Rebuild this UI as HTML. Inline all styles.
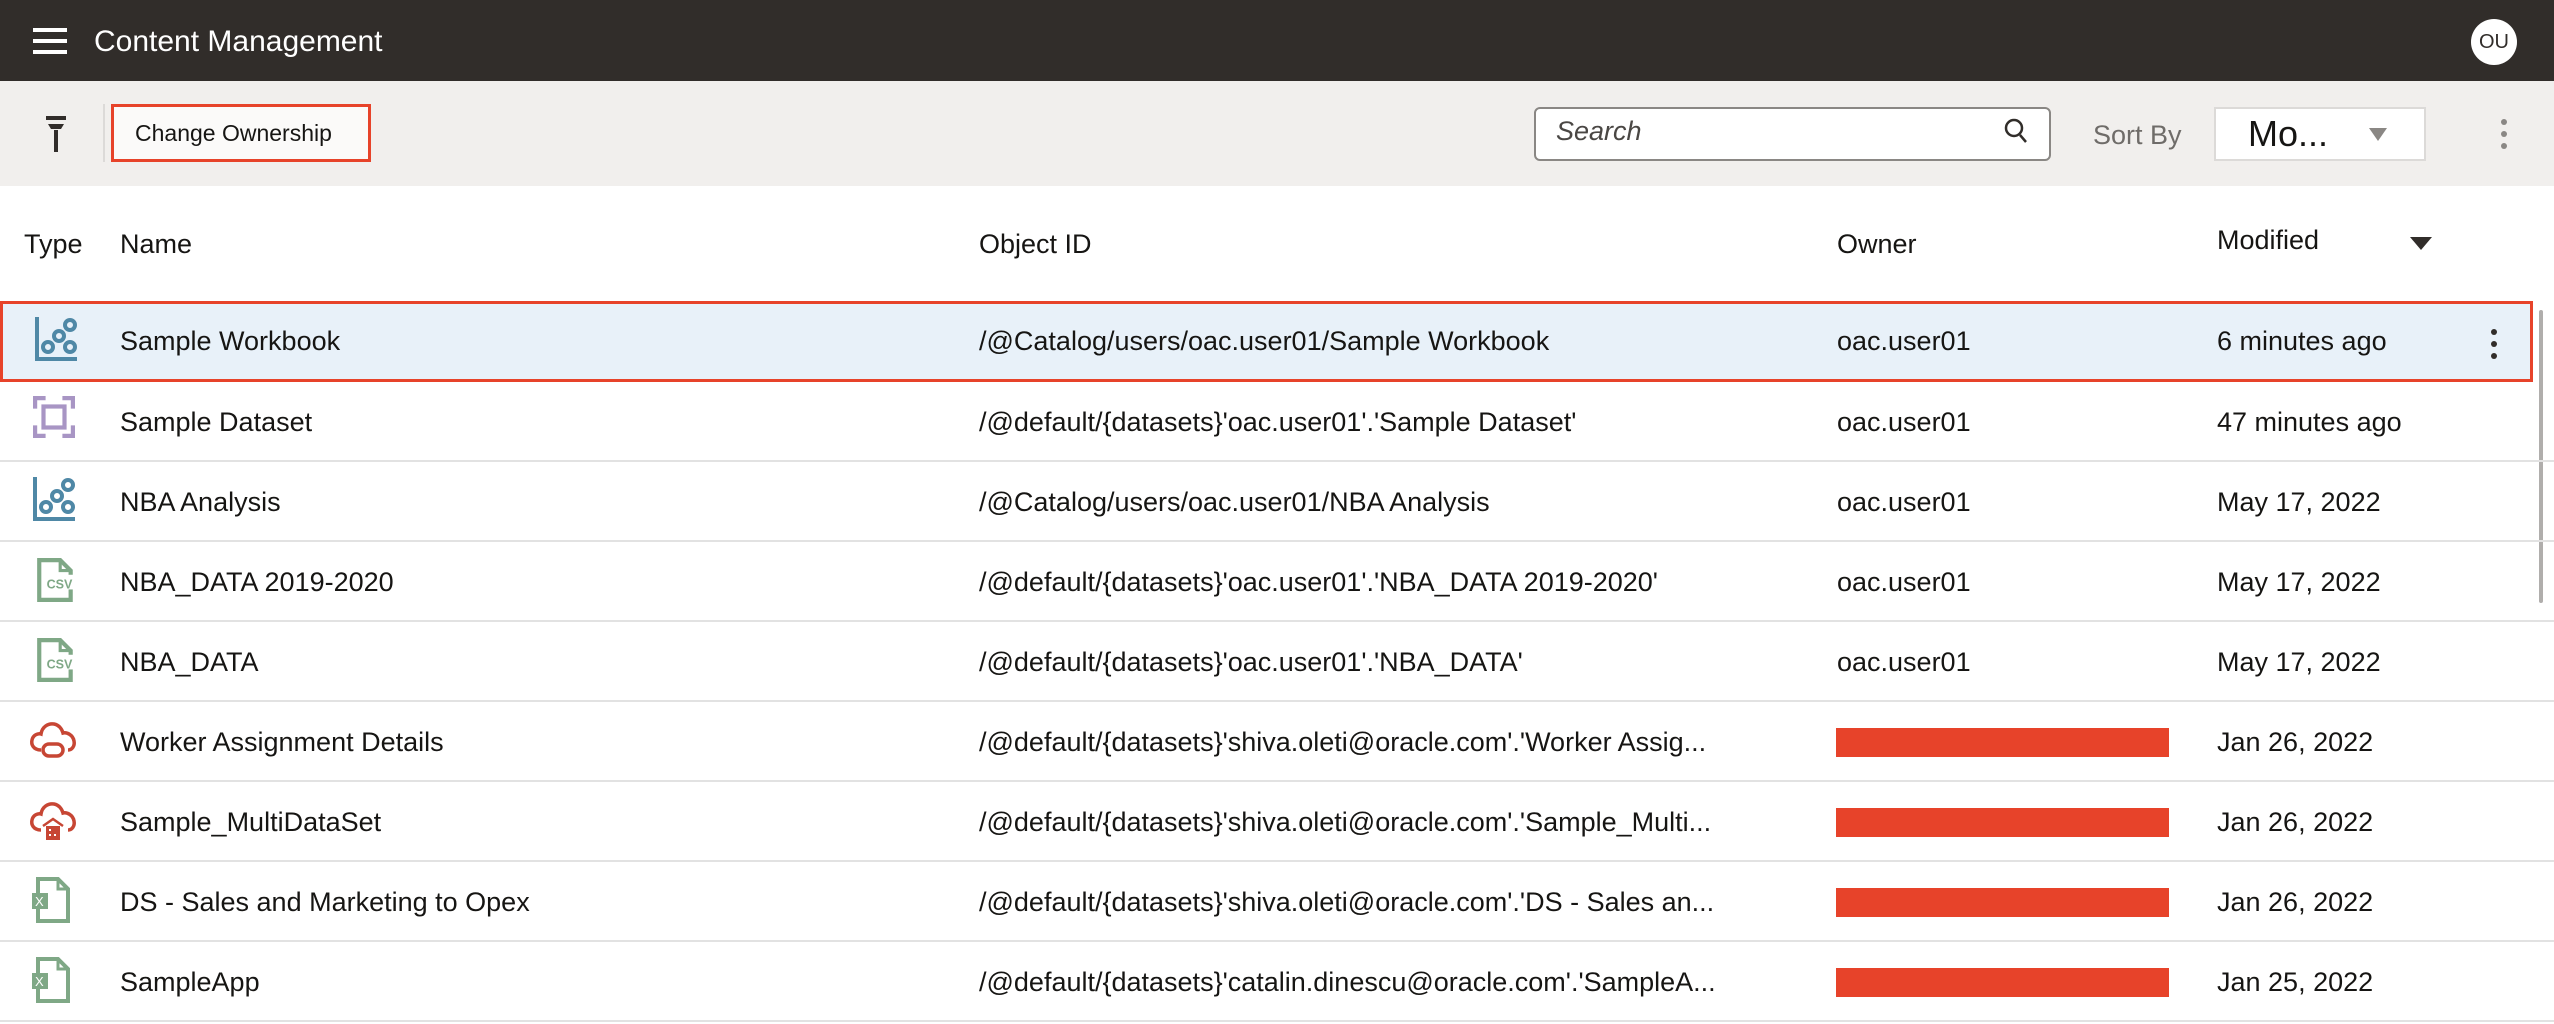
<!DOCTYPE html>
<html><head><meta charset="utf-8"><style>
*{margin:0;padding:0;box-sizing:border-box}
body{width:2554px;height:1024px;overflow:hidden;background:#fff;font-family:"Liberation Sans",sans-serif;color:#161513;position:relative}
.abs{position:absolute}
.hdr{left:0;top:0;width:2554px;height:81px;background:#312d2a}
.tb{left:0;top:81px;width:2554px;height:105px;background:#f1efed}
.t{position:absolute;white-space:nowrap;font-size:27px;line-height:32px}
.row{position:absolute;left:0;width:2554px;height:80px;border-bottom:2px solid #e2e2e2}
.row .t{top:24px}
.red{position:absolute;left:1836px;top:26px;width:333px;height:29px;background:#e7432a}
.ic{position:absolute;left:30px;top:18px}
.oid{width:800px;overflow:hidden}
</style></head><body>
<div class="abs hdr"></div>
<div class="abs" style="left:33px;top:28px;width:34px;height:4px;background:#fff"></div>
<div class="abs" style="left:33px;top:39px;width:34px;height:4px;background:#fff"></div>
<div class="abs" style="left:33px;top:50px;width:34px;height:4px;background:#fff"></div>
<div class="t" style="left:94px;top:24px;color:#fff;font-size:30px;line-height:36px">Content Management</div>
<div class="abs" style="left:2471px;top:19px;width:46px;height:46px;border-radius:50%;background:#fff;color:#312d2a;font-size:20px;line-height:46px;text-align:center">OU</div>

<div class="abs tb"></div>
<svg class="abs" style="left:44px;top:116px" width="24" height="38" viewBox="0 0 24 38"><rect x="2" y="0" width="20" height="4" fill="#312d2a"/><path d="M4 8h16l-3 5H7z" fill="#312d2a"/><rect x="10" y="14" width="4" height="22" fill="#312d2a"/></svg>
<div class="abs" style="left:103px;top:104px;width:2px;height:58px;background:#dcdad8"></div>
<div class="abs" style="left:111px;top:104px;width:260px;height:58px;border:3px solid #e7432a;background:#fbfaf9"></div>
<div class="t" style="left:135px;top:117px;font-size:23px">Change Ownership</div>
<div class="abs" style="left:1534px;top:107px;width:517px;height:54px;border:2px solid #8a8784;border-radius:6px;background:#fff"></div>
<div class="t" style="left:1556px;top:115px;font-style:italic;color:#4a4744;font-size:27px">Search</div>
<svg class="abs" style="left:2004px;top:118px" width="26" height="28" viewBox="0 0 26 28"><circle cx="10" cy="10" r="8" fill="none" stroke="#312d2a" stroke-width="2.5"/><path d="M16 17l6 7" stroke="#312d2a" stroke-width="2.5"/></svg>
<div class="t" style="left:2093px;top:119px;color:#6f6c69;font-size:27px">Sort By</div>
<div class="abs" style="left:2214px;top:107px;width:212px;height:54px;border:2px solid #dcdad8;background:#fff"></div>
<div class="t" style="left:2248px;top:114px;font-size:36px;line-height:40px">Mo...</div>
<svg class="abs" style="left:2369px;top:128px" width="18" height="14"><path d="M0 0h18L9 13z" fill="#8a8784"/></svg>
<svg class="abs" style="left:2499px;top:118px" width="10" height="34"><circle cx="5" cy="4" r="3" fill="#8a8784"/><circle cx="5" cy="16" r="3" fill="#8a8784"/><circle cx="5" cy="28" r="3" fill="#8a8784"/></svg>

<div class="t" style="left:24px;top:228px">Type</div>
<div class="t" style="left:120px;top:228px">Name</div>
<div class="t" style="left:979px;top:228px">Object ID</div>
<div class="t" style="left:1837px;top:228px">Owner</div>
<div class="t" style="left:2217px;top:224px">Modified</div>
<svg class="abs" style="left:2410px;top:237px" width="22" height="14"><path d="M0 0h22L11 13z" fill="#312d2a"/></svg>

<div class="row" style="top:301px;height:81px;background:#e8f1f9;border:3px solid #e7432a;width:2533px">
<svg class="ic" style="left:32px;top:13px" width="44" height="44" viewBox="0 0 44 44"><path d="M2 0v42h40" fill="none" stroke="#4f88a6" stroke-width="4"/><g fill="none" stroke="#4f88a6" stroke-width="4"><circle cx="13" cy="30" r="5"/><circle cx="24" cy="19" r="5"/><circle cx="35" cy="8" r="5"/><circle cx="35" cy="30" r="5"/></g></svg>
<div class="t" style="left:117px;top:21px">Sample Workbook</div>
<div class="t" style="left:976px;top:21px">/@Catalog/users/oac.user01/Sample Workbook</div>
<div class="t" style="left:1834px;top:21px">oac.user01</div>
<div class="t" style="left:2214px;top:21px">6 minutes ago</div>
<svg class="abs" style="left:2486px;top:24px" width="10" height="34"><circle cx="5" cy="4" r="3" fill="#312d2a"/><circle cx="5" cy="16" r="3" fill="#312d2a"/><circle cx="5" cy="28" r="3" fill="#312d2a"/></svg>
</div>
<div class="abs" style="left:2539px;top:310px;width:4px;height:293px;background:#b0aeac;border-radius:2px"></div>

<div class="row" style="top:382px">
<svg class="ic" style="left:33px;top:14px" width="42" height="42" viewBox="0 0 40 40"><g fill="none" stroke="#a895c4" stroke-width="4"><path d="M2 12V2h10M28 2h10v10M38 28v10H28M12 38H2V28"/><rect x="10" y="10" width="20" height="20"/></g></svg>
<div class="t" style="left:120px">Sample Dataset</div>
<div class="t oid" style="left:979px">/@default/{datasets}'oac.user01'.'Sample Dataset'</div>
<div class="t" style="left:1837px">oac.user01</div>
<div class="t" style="left:2217px">47 minutes ago</div></div>

<div class="row" style="top:462px">
<svg class="ic" style="left:33px;top:15px" width="44" height="44" viewBox="0 0 44 44"><path d="M2 0v42h40" fill="none" stroke="#4f88a6" stroke-width="4"/><g fill="none" stroke="#4f88a6" stroke-width="4"><circle cx="13" cy="30" r="5"/><circle cx="24" cy="19" r="5"/><circle cx="35" cy="8" r="5"/><circle cx="35" cy="30" r="5"/></g></svg>
<div class="t" style="left:120px">NBA Analysis</div>
<div class="t oid" style="left:979px">/@Catalog/users/oac.user01/NBA Analysis</div>
<div class="t" style="left:1837px">oac.user01</div>
<div class="t" style="left:2217px">May 17, 2022</div></div>

<div class="row" style="top:542px">
<svg class="ic" style="left:37px;top:16px" width="38" height="44" viewBox="0 0 36 42"><path d="M2 2h20l10 10v28H2z" fill="none" stroke="#7fa886" stroke-width="4"/><path d="M22 2v10h10" fill="none" stroke="#7fa886" stroke-width="3"/><rect x="8" y="16" width="28" height="14" fill="#fff"/><text x="9" y="29" font-family="Liberation Sans" font-size="12" font-weight="bold" fill="#7fa886">CSV</text></svg>
<div class="t" style="left:120px">NBA_DATA 2019-2020</div>
<div class="t oid" style="left:979px">/@default/{datasets}'oac.user01'.'NBA_DATA 2019-2020'</div>
<div class="t" style="left:1837px">oac.user01</div>
<div class="t" style="left:2217px">May 17, 2022</div></div>

<div class="row" style="top:622px">
<svg class="ic" style="left:37px;top:16px" width="38" height="44" viewBox="0 0 36 42"><path d="M2 2h20l10 10v28H2z" fill="none" stroke="#7fa886" stroke-width="4"/><path d="M22 2v10h10" fill="none" stroke="#7fa886" stroke-width="3"/><rect x="8" y="16" width="28" height="14" fill="#fff"/><text x="9" y="29" font-family="Liberation Sans" font-size="12" font-weight="bold" fill="#7fa886">CSV</text></svg>
<div class="t" style="left:120px">NBA_DATA</div>
<div class="t oid" style="left:979px">/@default/{datasets}'oac.user01'.'NBA_DATA'</div>
<div class="t" style="left:1837px">oac.user01</div>
<div class="t" style="left:2217px">May 17, 2022</div></div>

<div class="row" style="top:702px">
<svg class="ic" style="left:29px;top:18px" width="50" height="40" viewBox="0 0 50 40"><path d="M12 30C4 30 2 24 3 20c1-5 6-7 9-6 1-7 7-11 13-10 5 1 8 5 9 9 4-1 10 2 11 8 1 5-2 9-6 9" fill="none" stroke="#c74634" stroke-width="3.5"/><rect x="14" y="24" width="20" height="12" rx="6" fill="none" stroke="#c74634" stroke-width="3.5"/></svg>
<div class="t" style="left:120px">Worker Assignment Details</div>
<div class="t oid" style="left:979px">/@default/{datasets}'shiva.oleti@oracle.com'.'Worker Assig...</div>
<div class="red"></div>
<div class="t" style="left:2217px">Jan 26, 2022</div></div>

<div class="row" style="top:782px">
<svg class="ic" style="left:29px;top:18px" width="50" height="42" viewBox="0 0 50 42"><path d="M12 30C4 30 2 24 3 20c1-5 6-7 9-6 1-7 7-11 13-10 5 1 8 5 9 9 4-1 10 2 11 8 1 5-2 9-6 9" fill="none" stroke="#c74634" stroke-width="3.5"/><path d="M14 26l10-7 10 7" fill="none" stroke="#c74634" stroke-width="2.5"/><rect x="17" y="26" width="14" height="14" fill="#c74634"/><g fill="#fff"><rect x="20" y="29" width="2" height="2"/><rect x="20" y="34" width="2" height="2"/><rect x="25" y="34" width="2" height="2"/></g></svg>
<div class="t" style="left:120px">Sample_MultiDataSet</div>
<div class="t oid" style="left:979px">/@default/{datasets}'shiva.oleti@oracle.com'.'Sample_Multi...</div>
<div class="red"></div>
<div class="t" style="left:2217px">Jan 26, 2022</div></div>

<div class="row" style="top:862px">
<svg class="ic" style="left:30px;top:15px" width="42" height="46" viewBox="0 0 42 46"><path d="M8 2h20l10 10v32H8z" fill="none" stroke="#7fa886" stroke-width="4"/><path d="M28 2v10h10" fill="none" stroke="#7fa886" stroke-width="3"/><rect x="2" y="16" width="16" height="16" fill="#7fa886"/><text x="5" y="29" font-family="Liberation Sans" font-size="13" fill="#fff">X</text></svg>
<div class="t" style="left:120px">DS - Sales and Marketing to Opex</div>
<div class="t oid" style="left:979px">/@default/{datasets}'shiva.oleti@oracle.com'.'DS - Sales an...</div>
<div class="red"></div>
<div class="t" style="left:2217px">Jan 26, 2022</div></div>

<div class="row" style="top:942px">
<svg class="ic" style="left:30px;top:15px" width="42" height="46" viewBox="0 0 42 46"><path d="M8 2h20l10 10v32H8z" fill="none" stroke="#7fa886" stroke-width="4"/><path d="M28 2v10h10" fill="none" stroke="#7fa886" stroke-width="3"/><rect x="2" y="16" width="16" height="16" fill="#7fa886"/><text x="5" y="29" font-family="Liberation Sans" font-size="13" fill="#fff">X</text></svg>
<div class="t" style="left:120px">SampleApp</div>
<div class="t oid" style="left:979px">/@default/{datasets}'catalin.dinescu@oracle.com'.'SampleA...</div>
<div class="red"></div>
<div class="t" style="left:2217px">Jan 25, 2022</div></div>
</body></html>
